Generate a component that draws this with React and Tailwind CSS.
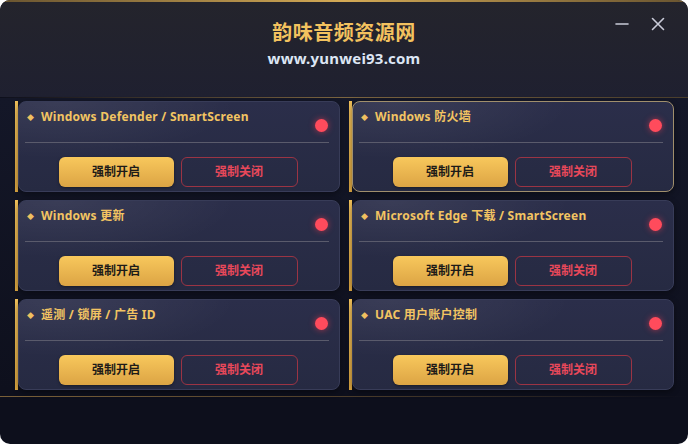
import React from 'react';

const items = [
  { title: 'Windows Defender / SmartScreen' },
  { title: 'Windows 防火墙', active: true },
  { title: 'Windows 更新' },
  { title: 'Microsoft Edge 下载 / SmartScreen' },
  { title: '遥测 / 锁屏 / 广告 ID' },
  { title: 'UAC 用户账户控制' },
];

const font = { fontFamily: '"Noto Sans", "Noto Sans CJK SC", sans-serif' };

const Card = ({ title, active }) => (
  <div className="flex h-[91px]">
    <div className="w-[3px] bg-gradient-to-b from-[#f0c05a] to-[#d9a440]" />
    <div
      className={`flex-1 flex flex-col rounded-[8px] border ${active ? 'border-[#a08f6c]' : 'border-[#383c58]'} bg-[radial-gradient(ellipse_at_12%_0%,rgba(255,255,255,0.07),transparent_45%),linear-gradient(to_bottom,#2b2e4a,#262a42)] shadow-[0_2px_6px_rgba(0,0,0,0.4)]`}
    >
      <div className="flex justify-between items-start h-[40px] pl-[8px] pr-[11px]">
        <div className="flex items-center gap-[7px] pt-[7px]">
          <span className="text-[#f0c060] text-[7px] leading-none">◆</span>
          <span className="text-[12px] font-bold text-[#f2c462] leading-[16px] tracking-[0.25px]">{title}</span>
        </div>
        <span className="mt-[17px] w-[13px] h-[13px] rounded-full bg-[#ff4b5c] shadow-[0_0_6px_rgba(255,60,80,0.6)]" />
      </div>
      <div className="h-px bg-[#5a5b6c] ml-[6px] mr-[10px]" />
      <div className="flex justify-center gap-[7px] mt-[14px] pr-[2px]">
        <button className="w-[115px] h-[30px] rounded-[6px] bg-gradient-to-b from-[#f8c85c] to-[#dca444] text-[12px] font-bold text-[#1d1b18] shadow-[0_1px_3px_rgba(0,0,0,0.4)]">
          强制开启
        </button>
        <button className="w-[117px] h-[30px] rounded-[6px] border border-[#9b3444] text-[12px] font-bold text-[#e8485a]">
          强制关闭
        </button>
      </div>
    </div>
  </div>
);

export default function App() {
  return (
    <div className="w-[688px] h-[444px] bg-white" style={font}>
      <div className="w-full h-full rounded-[10px] overflow-hidden bg-[#0d0f1c] flex flex-col relative">
        <div className="h-[2px] bg-gradient-to-r from-[#6a5530] via-[#d4aa55] to-[#6a5530]" />
        <div className="h-[95px] bg-gradient-to-b from-[#24242c] to-[#1f2030] flex flex-col items-center pt-[17px]">
          <div className="text-[20px] font-bold text-[#f3c25f] leading-[28px] tracking-[0.5px]">韵味音频资源网</div>
          <div className="text-[15px] font-bold text-[#dde6f4] leading-[20px] mt-[1px] tracking-[0.2px]">www.yunwei93.com</div>
        </div>
        <div className="absolute top-[16px] right-[22px] flex items-center gap-[20px]">
          <svg width="16" height="16" viewBox="0 0 16 16">
            <path d="M2 8h12" stroke="#c9cbd8" strokeWidth="1.6" strokeLinecap="round" />
          </svg>
          <svg width="16" height="16" viewBox="0 0 16 16">
            <path d="M2.5 2.5l11 11M13.5 2.5l-11 11" stroke="#c9cbd8" strokeWidth="1.6" strokeLinecap="round" />
          </svg>
        </div>
        <div className="h-px bg-gradient-to-r from-transparent via-[#7d6640] to-[#4a3e2c]" />
        <div className="grid grid-cols-2 gap-x-[9px] gap-y-[8px] pl-[15px] pr-[14px] pt-[3px] bg-gradient-to-b from-[#141728] to-[#0e101d]">
          {items.map((it) => (
            <Card key={it.title} {...it} />
          ))}
        </div>
        <div className="h-px mt-[6px] bg-gradient-to-r from-[#7a6038] via-[#4c3d2a] to-transparent" />
        <div className="flex-1" />
      </div>
    </div>
  );
}
